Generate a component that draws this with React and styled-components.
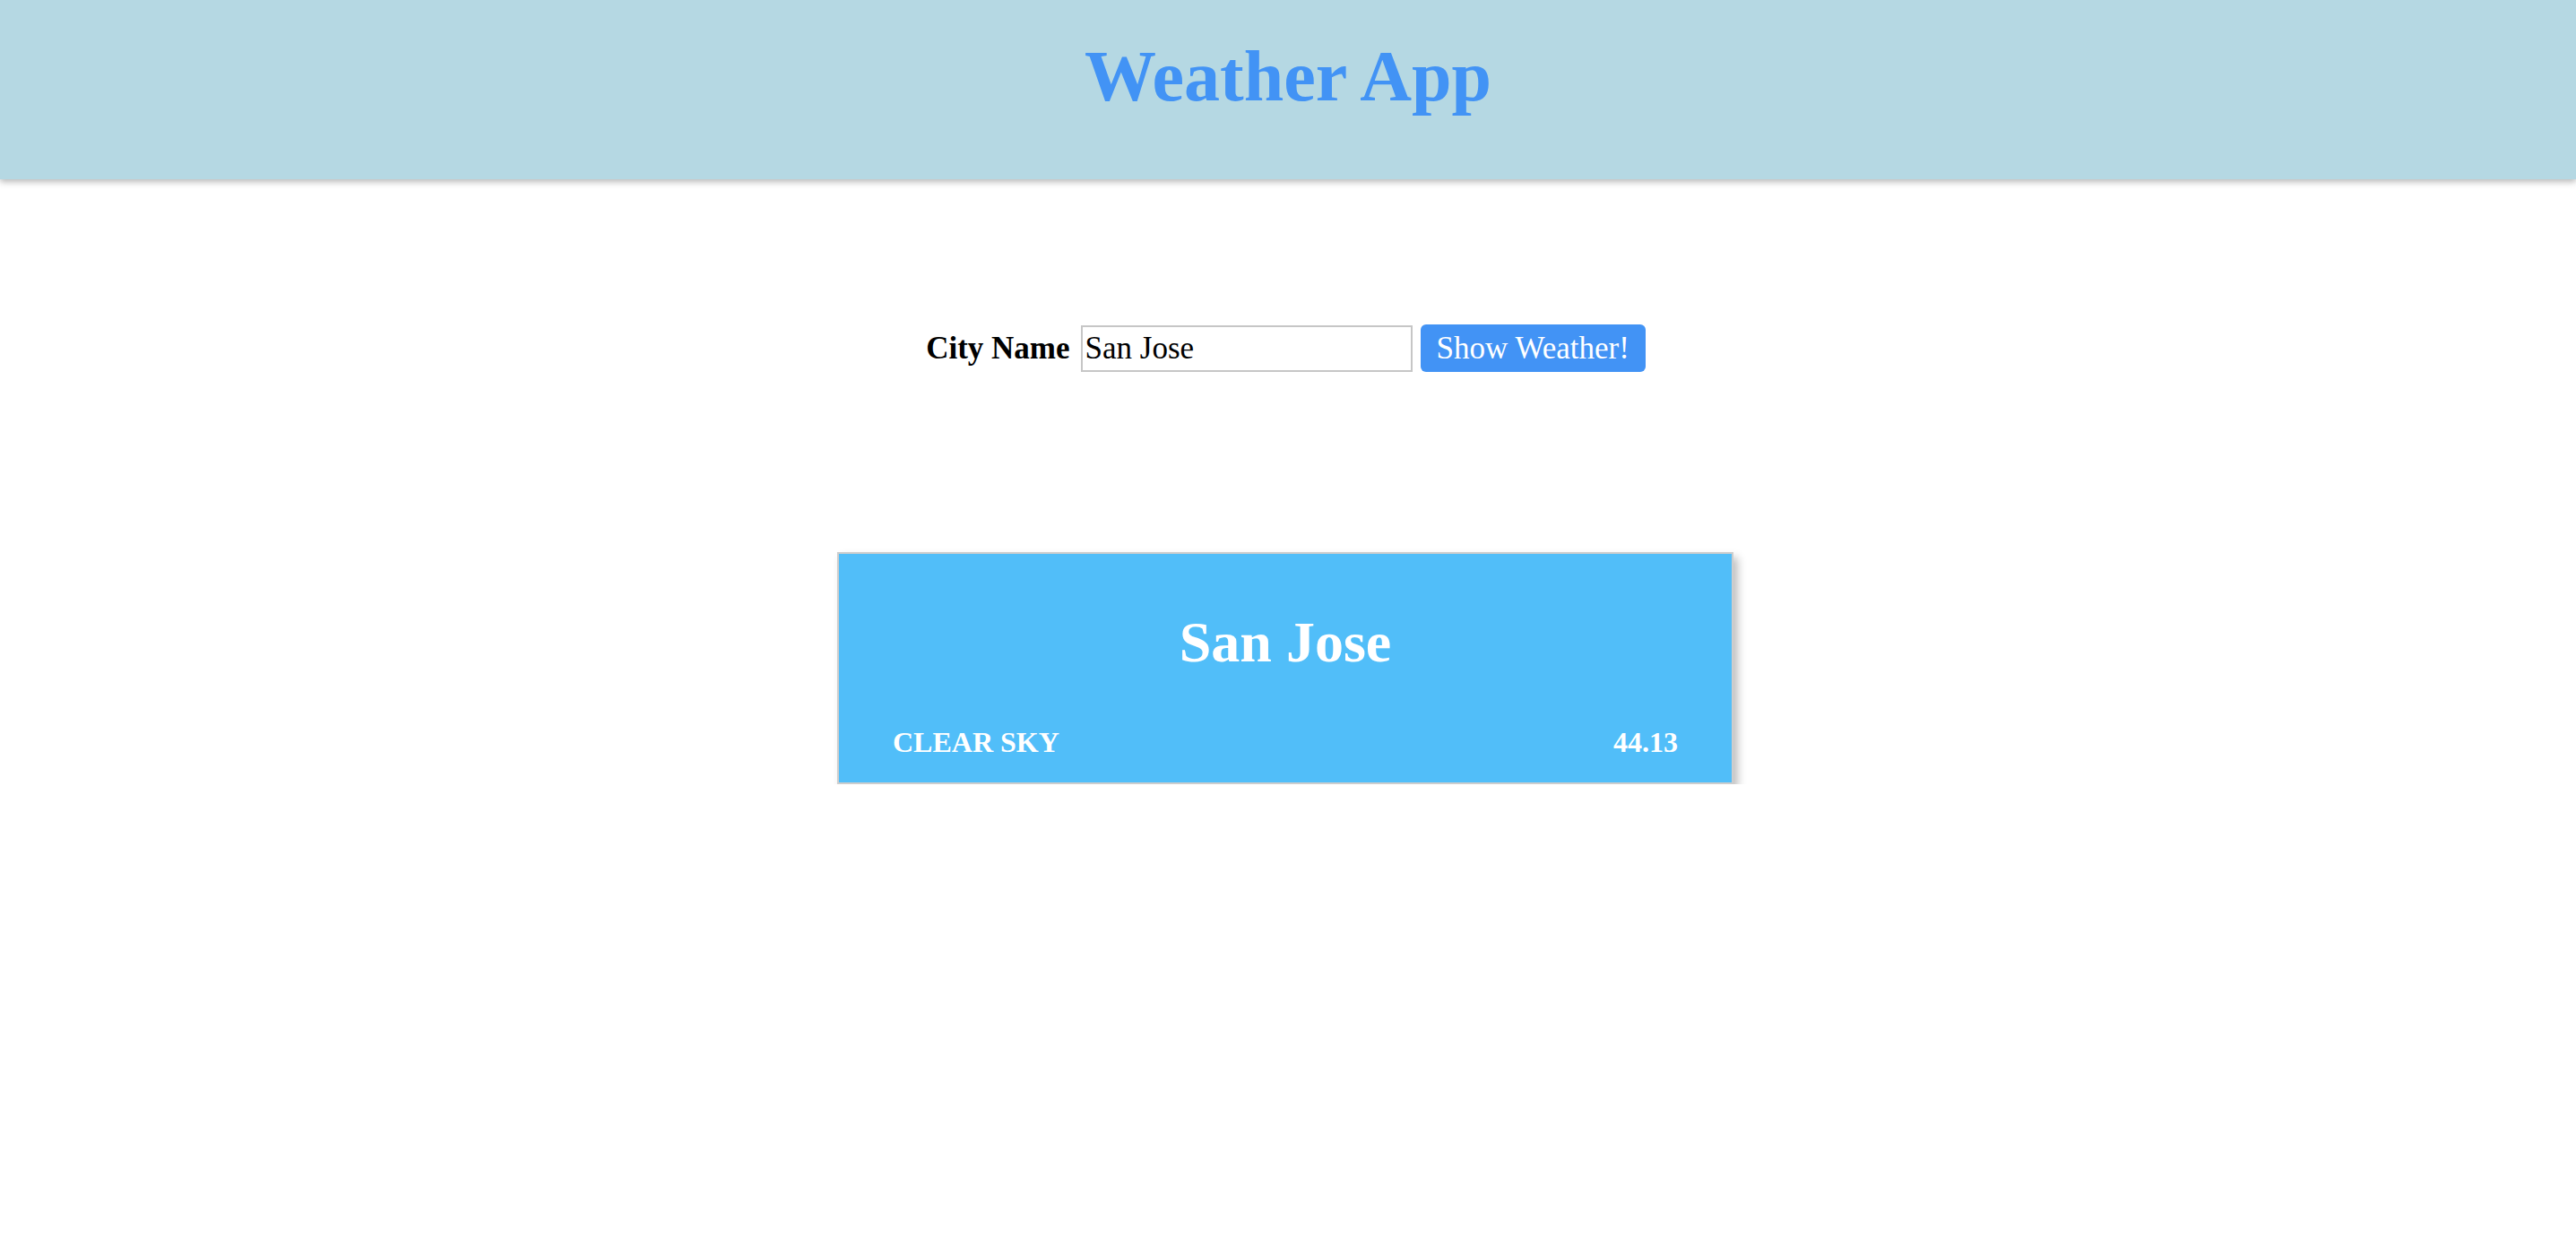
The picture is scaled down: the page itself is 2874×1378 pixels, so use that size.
import React from 'react'
import styled, { createGlobalStyle } from 'styled-components'

const GlobalStyle = createGlobalStyle`
body {
    margin: 0;
    background: #fff;
    font-family: "Liberation Serif", "Times New Roman", serif;
}
`;

const Header = styled.header`
height: 200px;
box-sizing: border-box;
padding-top: 40px;
background-color: #b5d8e3;
box-shadow: 0 3px 7px rgba(0, 0, 0, 0.28);
text-align: center;
h1 {
    margin: 0;
    font-size: 80px;
    font-weight: bold;
    color: #4293f5;
}
`;

const Form = styled.form`
display: flex;
justify-content: center;
align-items: center;
margin-top: 162px;
padding-right: 5px;
label {
    font-size: 35px;
    font-weight: bold;
    color: #000;
    margin-right: 12px;
}
`;

const CityInput = styled.input`
box-sizing: border-box;
width: 370px;
height: 52px;
margin: 0 9px 0 0;
padding: 0 3px;
border: 2px solid #c6c6c6;
font-family: "Liberation Serif", "Times New Roman", serif;
font-size: 35px;
color: #000;
outline: none;
`;

const ShowButton = styled.button`
box-sizing: border-box;
height: 53px;
padding: 0 18px;
border: none;
border-radius: 6px;
background-color: #4293f5;
color: #fff;
font-family: "Liberation Serif", "Times New Roman", serif;
font-size: 35px;
cursor: pointer;
`;

const Stage = styled.div`
padding-right: 6px;
`;

const Card = styled.div`
box-sizing: border-box;
width: 1000px;
margin: 201px auto 0;
padding: 62px 60px 26px;
background-color: #51bef9;
border: 2px solid #cdcdcd;
box-shadow: 5px 6px 9px rgba(0, 0, 0, 0.25);
color: #fff;
h2 {
    margin: 0 0 56px;
    font-size: 64px;
    font-weight: bold;
    text-align: center;
}
`;

const CardFooter = styled.div`
display: flex;
justify-content: space-between;
font-size: 32px;
font-weight: bold;
`;

const weather = { city: 'San Jose', description: 'clear sky', temp: 44.13 };

function App() {
    return (
        <>
            <GlobalStyle />
            <Header>
                <h1>Weather App</h1>
            </Header>
            <Form onSubmit={e => e.preventDefault()}>
                <label htmlFor="city">City Name</label>
                <CityInput id="city" defaultValue="San Jose" />
                <ShowButton type="submit">Show Weather!</ShowButton>
            </Form>
            <Stage>
                <Card>
                    <h2>{weather.city}</h2>
                    <CardFooter>
                        <span>{weather.description.toUpperCase()}</span>
                        <span>{weather.temp}</span>
                    </CardFooter>
                </Card>
            </Stage>
        </>
    );
}

export default App;
